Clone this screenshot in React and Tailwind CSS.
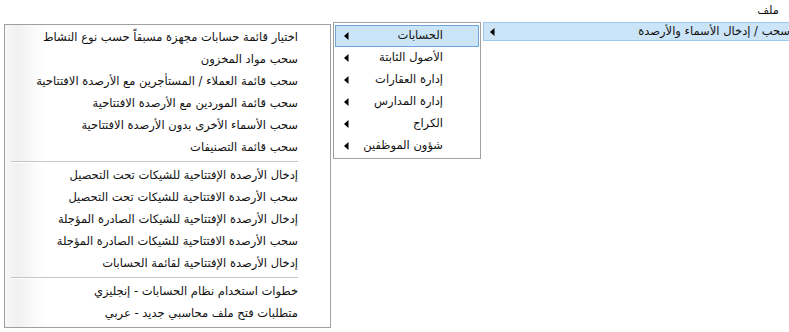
import React from "react";

const font = { fontFamily: '"DejaVu Sans", "Noto Sans", sans-serif' };

function Arrow() {
  return (
    <svg width="5" height="8" viewBox="0 0 5 8" className="shrink-0">
      <path d="M4.5 0 L0 4 L4.5 8 Z" fill="#000" />
    </svg>
  );
}

const level2 = [
  "الحسابات",
  "الأصول الثابتة",
  "إدارة العقارات",
  "إدارة المدارس",
  "الكراج",
  "شؤون الموظفين",
];

const group1 = [
  "اختيار قائمة حسابات مجهزة مسبقاً حسب نوع النشاط",
  "سحب مواد المخزون",
  "سحب قائمة العملاء / المستأجرين مع الأرصدة الافتتاحية",
  "سحب قائمة الموردين مع الأرصدة الافتتاحية",
  "سحب الأسماء الأخرى بدون الأرصدة الافتتاحية",
  "سحب قائمة التصنيفات",
];
const group2 = [
  "إدخال الأرصدة الإفتتاحية للشيكات تحت التحصيل",
  "سحب الأرصدة الافتتاحية للشيكات تحت التحصيل",
  "إدخال الأرصدة الإفتتاحية للشيكات الصادرة المؤجلة",
  "سحب الأرصدة الافتتاحية للشيكات الصادرة المؤجلة",
  "إدخال الأرصدة الإفتتاحية لقائمة الحسابات",
];
const group3 = [
  "خطوات استخدام نظام الحسابات - إنجليزي",
  "متطلبات فتح ملف محاسبي جديد - عربي",
];

function Row3({ text }) {
  return (
    <div className="h-[22px] flex items-center pr-[32px] whitespace-nowrap text-[11.5px] text-[#111]">
      {text}
    </div>
  );
}

function Sep() {
  return (
    <div className="h-[6px] flex flex-col justify-center pl-[6px] pr-[32px]">
      <div className="h-px bg-[#c5c5c5]" />
      <div className="h-px bg-white" />
    </div>
  );
}

export default function App() {
  return (
    <div className="relative w-[789px] h-[332px] bg-white overflow-hidden" style={font}>
      <div dir="rtl" className="h-[21px] flex items-center pr-[10px] text-[11.5px] text-[#111]">
        ملف
      </div>

      {/* level 1 highlighted item */}
      <div
        dir="rtl"
        className="absolute left-[483px] top-[22px] right-[-2px] h-[19px] bg-[#cce4f7] border border-[#9ec8ef] flex items-center justify-between pl-[6px] text-[11.5px] text-[#111] whitespace-nowrap"
      >
        <span>سحب / إدخال الأسماء والأرصدة</span>
        <Arrow />
      </div>

      {/* level 2 submenu */}
      <div
        dir="rtl"
        className="absolute left-[333px] top-[22px] w-[148px] h-[137px] border border-[#a0a0a0] bg-white pt-[2px] px-[1px] flex flex-col"
      >
        {level2.map((t, i) => (
          <div
            key={t}
            className={
              "h-[22px] shrink-0 flex items-center justify-between pr-[35px] pl-[8px] text-[11.5px] text-[#111] whitespace-nowrap border " +
              (i === 0 ? "bg-[#cce4f7] border-[#6fa6dc]" : "border-transparent")
            }
          >
            <span>{t}</span>
            <Arrow />
          </div>
        ))}
      </div>

      {/* level 3 submenu */}
      <div
        dir="rtl"
        className="absolute left-[4px] top-[24px] w-[327px] h-[304px] border border-[#a0a0a0] bg-[linear-gradient(to_left,#ffffff_88%,#f1f1f1_96%,#f7f7f7_100%)] pt-[2px] flex flex-col"
      >
        {group1.map((t) => (
          <Row3 key={t} text={t} />
        ))}
        <Sep />
        {group2.map((t) => (
          <Row3 key={t} text={t} />
        ))}
        <Sep />
        {group3.map((t) => (
          <Row3 key={t} text={t} />
        ))}
      </div>
    </div>
  );
}
